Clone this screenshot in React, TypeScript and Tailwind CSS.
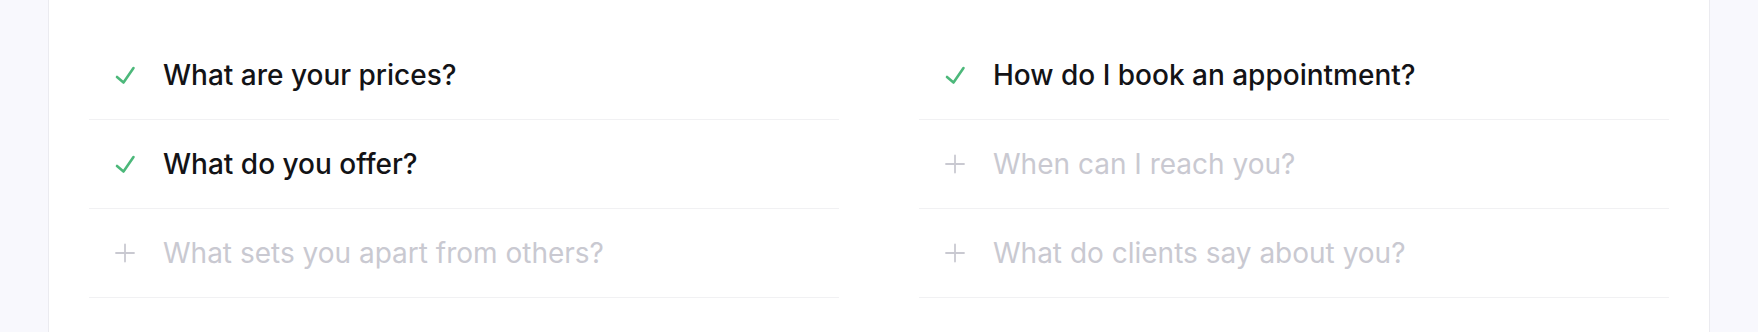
import { useState } from "react";

type Faq = { q: string; open: boolean };

const leftFaqs: Faq[] = [
  { q: "What are your prices?", open: true },
  { q: "What do you offer?", open: true },
  { q: "What sets you apart from others?", open: false },
];

const rightFaqs: Faq[] = [
  { q: "How do I book an appointment?", open: true },
  { q: "When can I reach you?", open: false },
  { q: "What do clients say about you?", open: false },
];

const CheckIcon = () => (
  <svg viewBox="0 0 24 24" className="w-6 h-6 shrink-0" fill="none" stroke="#4cb87a" strokeWidth={2.6} strokeLinecap="round" strokeLinejoin="round">
    <path d="M4 14l6.5 5.5L20.5 5" />
  </svg>
);

const PlusIcon = () => (
  <svg viewBox="0 0 24 24" className="w-6 h-6 shrink-0" fill="none" stroke="#c9c9d1" strokeWidth={1.8} strokeLinecap="round">
    <path d="M3 12h18M12 3.5v17" />
  </svg>
);

const FaqRow = ({ faq }: { faq: Faq }) => (
  <div className="flex items-center gap-[26px] h-[89px] pl-6 border-b border-[#f1f1f3]">
    {faq.open ? <CheckIcon /> : <PlusIcon />}
    <span
      className={
        faq.open
          ? "text-[28px] font-medium text-[#131316]"
          : "text-[28px] font-normal text-[#c9c9d1]"
      }
    >
      {faq.q}
    </span>
  </div>
);

const App = () => {
  const [cols] = useState([leftFaqs, rightFaqs]);
  return (
    <div className="min-h-[332px] bg-[#f8f8fd] px-12 font-['Inter',sans-serif]">
      <div className="bg-white border-x border-[#ebebf0] min-h-[332px] px-10 pt-[31px]">
        <div className="grid grid-cols-2 gap-20">
          {cols.map((col, i) => (
            <div key={i}>
              {col.map((faq) => (
                <FaqRow key={faq.q} faq={faq} />
              ))}
            </div>
          ))}
        </div>
      </div>
    </div>
  );
};

export default App;
